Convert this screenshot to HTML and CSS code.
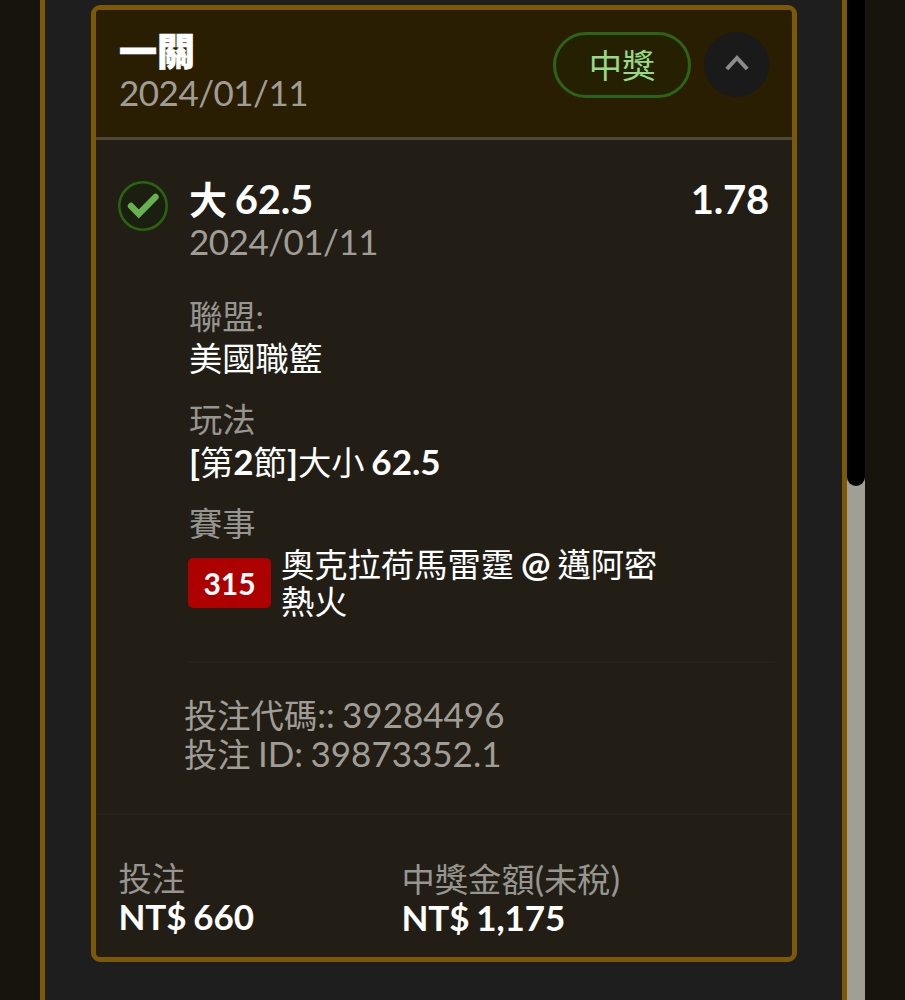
FILE: index.html
```html
<!DOCTYPE html>
<html lang="zh-Hant">

<head>
    <meta charset="UTF-8">
    <meta name="viewport" content="width=device-width, initial-scale=1.0">
    <title>投注紀錄</title>
    <link rel="stylesheet" href="styles.css">
</head>

<body>
    <div class="panel">
        <div class="content">
            <div class="card">
                <header class="card-header">
                    <div class="heading">
                        <h2 class="title">一關</h2>
                        <div class="date">2024/01/11</div>
                    </div>
                    <span class="status">中獎</span>
                    <button class="toggle" aria-label="收合">
                        <svg width="24" height="17" viewBox="0 0 24 17">
                            <path d="M1.8 15 L12 4 L22.2 15" fill="none" stroke="#8b8b8b" stroke-width="4" />
                        </svg>
                    </button>
                </header>

                <section class="bet">
                    <svg class="check" width="50" height="50" viewBox="0 0 50 50">
                        <circle cx="25" cy="25" r="23.7" fill="#1b1f10" stroke="#296511" stroke-width="2.5" />
                        <path d="M13 25 L20.8 33 L37.5 16" fill="none" stroke="#68b052" stroke-width="6.4" stroke-linecap="round" />
                    </svg>
                    <div class="bet-body">
                        <div class="pick">
                            <div><span class="pick-type">大</span> 62.5</div>
                            <div>1.78</div>
                        </div>
                        <div class="date">2024/01/11</div>

                        <dl class="details">
                            <dt>聯盟:</dt>
                            <dd>美國職籃</dd>
                            <dt>玩法</dt>
                            <dd><b>[</b>第<b>2</b>節<b>]</b>大小<b> 62.5</b></dd>
                            <dt>賽事</dt>
                            <dd class="match">
                                <span class="match-id">315</span>
                                <span class="teams">奧克拉荷馬雷霆<b> @ </b>邁阿密<br>熱火</span>
                            </dd>
                        </dl>

                        <div class="codes">
                            <div>投注代碼<span class="num">:: 39284496</span></div>
                            <div>投注<span class="num"> ID: 39873352.1</span></div>
                        </div>
                    </div>
                </section>

                <footer class="totals">
                    <div class="total">
                        <div class="label">投注</div>
                        <div class="amount">NT$ 660</div>
                    </div>
                    <div class="total">
                        <div class="label">中獎金額<span class="num">(</span>未稅<span class="num">)</span></div>
                        <div class="amount">NT$ 1,175</div>
                    </div>
                </footer>
            </div>
        </div>
        <div class="scrollbar">
            <div class="thumb"></div>
        </div>
    </div>
</body>

</html>
```
FILE: styles.css
```css
* {
    box-sizing: border-box;
}

body {
    margin: 0;
    height: 1000px;
    overflow: hidden;
    background: #17140d;
    color: #fff;
    font-family: Lato, "Noto Sans CJK TC", sans-serif;
    font-size: 33.3px;
    line-height: 41.5px;
    word-spacing: -1.6px;
}

.panel {
    display: flex;
    width: 825px;
    height: 1000px;
    margin-left: 40px;
}

.content {
    width: 807px;
    padding: 5px 45px 0 46px;
    border: solid #7c5906;
    border-width: 0 5px;
    background: #1e1e1e;
}

.card {
    height: 957px;
    border: 5px solid #7c5906;
    border-radius: 9px;
    background: #221e16;
    overflow: hidden;
}

.card-header {
    display: flex;
    align-items: flex-start;
    height: 130px;
    padding: 22px 23px 0 23px;
    background: #2a1e02;
    border-bottom: 3px solid #4d473a;
}

.heading {
    flex: 1;
    margin-top: -2px;
}

.title {
    margin: 0;
    font-size: 38px;
    font-weight: 900;
    line-height: 41px;
    -webkit-text-stroke: 0.7px #fff;
}

.date {
    color: #a09d97;
    font-size: 35px;
    line-height: 42px;
    letter-spacing: -0.5px;
}

.status {
    width: 138px;
    height: 66px;
    border: 3px solid #2a6414;
    border-radius: 33px;
    background: #262003;
    color: #97d985;
    line-height: 60px;
    text-align: center;
}

.toggle {
    display: flex;
    align-items: center;
    justify-content: center;
    width: 65px;
    height: 65px;
    margin-left: 13px;
    padding: 0 0 5px;
    border: 0;
    border-radius: 50%;
    background: #1a1a1a;
}

.bet {
    display: flex;
    height: 675px;
    padding: 39px 23px 0 22px;
    border-bottom: 2px solid #26221a;
}

.check {
    margin-top: 2px;
    margin-right: 21px;
}

.bet-body {
    flex: 1;
}

.pick {
    display: flex;
    justify-content: space-between;
    font-size: 40px;
    font-weight: bold;
    line-height: 41px;
    letter-spacing: -0.2px;
}

.pick-type {
    font-size: 38px;
}

.details {
    height: 367px;
    margin: 34px -6px 0 0;
    border-bottom: 2px solid #26221a;
}

.details dt {
    color: #979590;
}

.details dd {
    margin: 0 0 20px;
}

.details b,
.num {
    font-size: 35px;
}

.details .match {
    display: flex;
    align-items: center;
    margin-left: -1px;
    line-height: 37.5px;
}

.match-id {
    width: 83px;
    height: 50px;
    margin-right: 10px;
    border-radius: 5px;
    background: #ad0000;
    font-size: 30px;
    font-weight: bold;
    line-height: 50px;
    text-align: center;
}

.codes {
    margin: 32px 0 0 -5px;
    color: #a09d97;
    line-height: 38px;
}

.totals {
    display: flex;
    padding: 44px 22.5px 0;
}

.total {
    width: 283px;
    line-height: 38px;
    white-space: nowrap;
}

.label {
    color: #979590;
}

.amount {
    font-size: 35px;
    font-weight: bold;
    letter-spacing: -0.1px;
}

.scrollbar {
    width: 18px;
    background: #a19e96;
}

/* starts above the fold, only its lower end is rounded */
.thumb {
    height: 486px;
    border-radius: 0 0 9px 9px;
    background: #000;
}
```
